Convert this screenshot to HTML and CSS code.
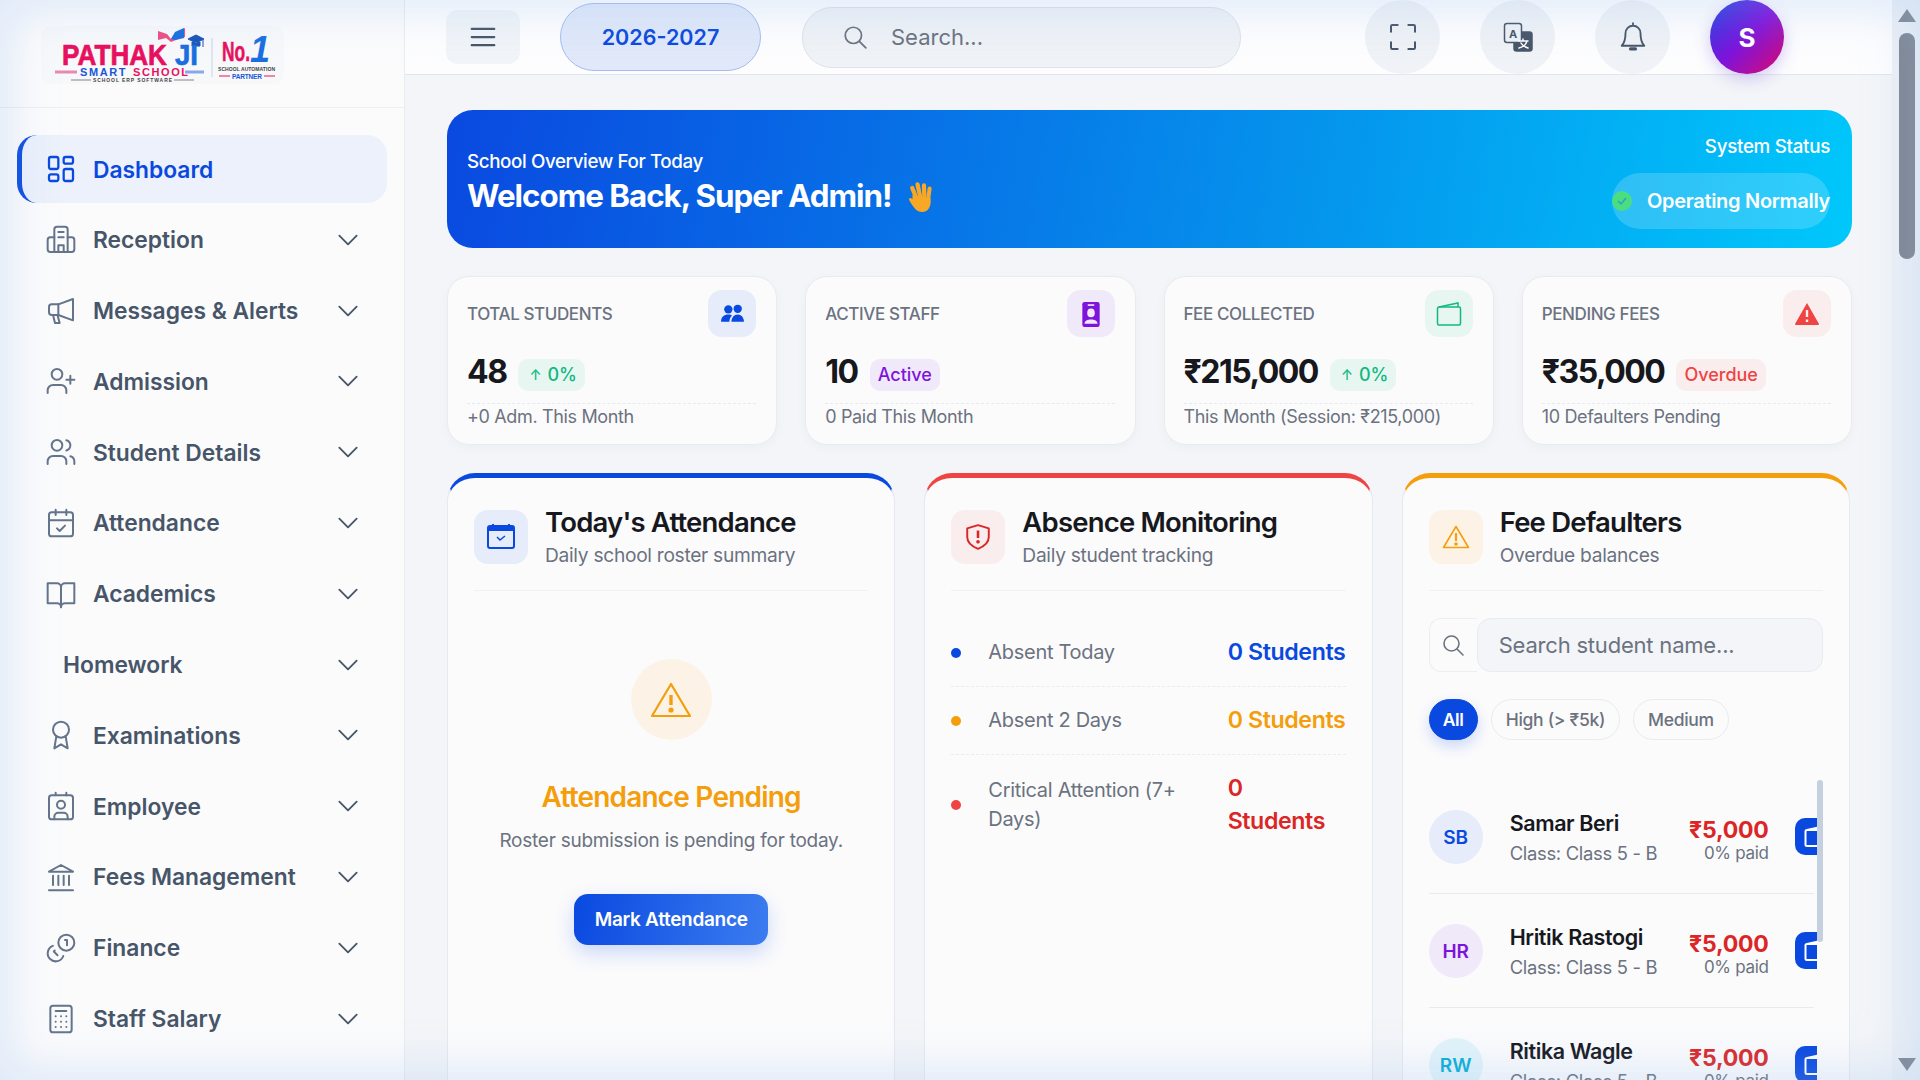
FILE: index.html
```html
<!DOCTYPE html>
<html lang="en">
<head>
    <meta charset="UTF-8">
    <meta name="viewport" content="width=device-width, initial-scale=1.0">
    <title>Pathak Ji Smart School - Dashboard</title>
    <link rel="stylesheet" href="styles.css">
</head>
<body>
    <aside class="sidebar">
        <div class="brand">
            <svg class="logo" viewBox="0 0 243 58" width="243" height="58">
                <rect width="243" height="58" rx="10" fill="#f7f8fa"/>
                <path d="M117 14V5l9 3 4 5v3l-5-4zM130 13l5-7 9-4v9l-9 3-5 2z" fill="#e8175d" opacity=".75"/>
                <path d="M130 13l4-7 9-4v10l-9 2z" fill="#1a6fe0"/>
                <path d="M147 13l8-4 8 4-8 4zM151 16v4h8v-4M162 13v8" fill="#1a55b8" stroke="#1a55b8"/>
                <text x="21" y="39" class="logo-big" fill="#e8105e" stroke="#e8105e" stroke-width=".7" textLength="105" lengthAdjust="spacingAndGlyphs">PATHAK</text>
                <text x="134" y="39" class="logo-big" fill="#1a6fe0" stroke="#1a6fe0" stroke-width=".7" textLength="23" lengthAdjust="spacingAndGlyphs">JI</text>
                <path d="M14 46h22" stroke="#e88ab0" stroke-width="3"/>
                <path d="M144 46h19" stroke="#88a8e8" stroke-width="3"/>
                <text x="39" y="50" class="logo-mid" fill="#1a55d8">SMART</text>
                <text x="92" y="50" class="logo-mid" fill="#e8105e">SCHOOL</text>
                <path d="M30 54h20M133 54h20" stroke="#555" stroke-width=".7"/>
                <text x="52" y="56" class="logo-tiny" fill="#444" textLength="79">SCHOOL ERP SOFTWARE</text>
                <path d="M171 12v39" stroke="#c9d3e6"/>
                <text x="181" y="35" class="logo-no" fill="#e8105e" stroke="#e8105e" stroke-width=".5" textLength="28" lengthAdjust="spacingAndGlyphs">No.</text>
                <text x="209" y="36" class="logo-one" fill="#1a6fe0">1</text>
                <text x="177" y="44.700" class="logo-tiny" fill="#444" textLength="57">SCHOOL AUTOMATION</text>
                <path d="M178 50h11M223 50h11" stroke="#e8105e"/>
                <text x="191" y="52.500" class="logo-partner" fill="#1a55d8" textLength="30">PARTNER</text>
            </svg>
        </div>
        <nav class="nav">
            <a class="nav-item active">
                <svg class="nav-icon" viewBox="0 0 24 24"><rect x="3" y="3" width="7" height="9" rx="1.500"/><rect x="14" y="3" width="7" height="5" rx="1.500"/><rect x="14" y="12" width="7" height="9" rx="1.500"/><rect x="3" y="16" width="7" height="5" rx="1.500"/></svg>
                <span>Dashboard</span>
            </a>
            <a class="nav-item">
                <svg class="nav-icon" viewBox="0 0 24 24"><path d="M7 21V4a2 2 0 0 1 2-2h6a2 2 0 0 1 2 2v17"/><path d="M7 10H4a2 2 0 0 0-2 2v7a2 2 0 0 0 2 2h16a2 2 0 0 0 2-2v-7a2 2 0 0 0-2-2h-3"/><path d="M10 6h4M10 10h4M10 21v-5h4v5"/></svg>
                <span>Reception</span>
                <svg class="chevron" viewBox="0 0 24 24"><path d="M4 8l8 8 8-8"/></svg>
            </a>
            <a class="nav-item">
                <svg class="nav-icon" viewBox="0 0 24 24"><path d="M21 3v16L10 15H5a2 2 0 0 1-2-2V9a2 2 0 0 1 2-2h5z"/><path d="M10 7v8M6 15l1.500 6h3.500l-1.500-5.500"/></svg>
                <span>Messages &amp; Alerts</span>
                <svg class="chevron" viewBox="0 0 24 24"><path d="M4 8l8 8 8-8"/></svg>
            </a>
            <a class="nav-item">
                <svg class="nav-icon" viewBox="0 0 24 24"><path d="M16 21v-2a4 4 0 0 0-4-4H6a4 4 0 0 0-4 4v2"/><circle cx="9" cy="7" r="4"/><path d="M19 8v6M22 11h-6"/></svg>
                <span>Admission</span>
                <svg class="chevron" viewBox="0 0 24 24"><path d="M4 8l8 8 8-8"/></svg>
            </a>
            <a class="nav-item">
                <svg class="nav-icon" viewBox="0 0 24 24"><path d="M16 21v-2a4 4 0 0 0-4-4H6a4 4 0 0 0-4 4v2"/><circle cx="9" cy="7" r="4"/><path d="M22 21v-2a4 4 0 0 0-3-3.870M16 3.130a4 4 0 0 1 0 7.750"/></svg>
                <span>Student Details</span>
                <svg class="chevron" viewBox="0 0 24 24"><path d="M4 8l8 8 8-8"/></svg>
            </a>
            <a class="nav-item">
                <svg class="nav-icon" viewBox="0 0 24 24"><rect x="3" y="4" width="18" height="18" rx="2"/><path d="M16 2v4M8 2v4M3 10h18M9 16l2 2 4-4"/></svg>
                <span>Attendance</span>
                <svg class="chevron" viewBox="0 0 24 24"><path d="M4 8l8 8 8-8"/></svg>
            </a>
            <a class="nav-item">
                <svg class="nav-icon" viewBox="0 0 24 24"><path d="M2 4h7a3 3 0 0 1 3 3v15a3 3 0 0 0-3-3H2z"/><path d="M22 4h-7a3 3 0 0 0-3 3v15a3 3 0 0 1 3-3h7z"/></svg>
                <span>Academics</span>
                <svg class="chevron" viewBox="0 0 24 24"><path d="M4 8l8 8 8-8"/></svg>
            </a>
            <a class="nav-item no-icon">
                <span>Homework</span>
                <svg class="chevron" viewBox="0 0 24 24"><path d="M4 8l8 8 8-8"/></svg>
            </a>
            <a class="nav-item">
                <svg class="nav-icon" viewBox="0 0 24 24"><circle cx="12" cy="8" r="6"/><path d="M15.500 13L17 22l-5-3-5 3 1.500-9"/></svg>
                <span>Examinations</span>
                <svg class="chevron" viewBox="0 0 24 24"><path d="M4 8l8 8 8-8"/></svg>
            </a>
            <a class="nav-item">
                <svg class="nav-icon" viewBox="0 0 24 24"><rect x="3" y="4" width="18" height="18" rx="2"/><circle cx="12" cy="11" r="3"/><path d="M7 22v-2a3 3 0 0 1 3-3h4a3 3 0 0 1 3 3v2M8 2v2M16 2v2"/></svg>
                <span>Employee</span>
                <svg class="chevron" viewBox="0 0 24 24"><path d="M4 8l8 8 8-8"/></svg>
            </a>
            <a class="nav-item">
                <svg class="nav-icon" viewBox="0 0 24 24"><path d="M3 22h18M6 18v-7M10 18v-7M14 18v-7M18 18v-7M12 3l9 5H3zM3 8h18"/></svg>
                <span>Fees Management</span>
                <svg class="chevron" viewBox="0 0 24 24"><path d="M4 8l8 8 8-8"/></svg>
            </a>
            <a class="nav-item">
                <svg class="nav-icon" viewBox="0 0 24 24"><circle cx="16" cy="8" r="6"/><path d="M5.900 10.400A6 6 0 1 0 13.700 18M15 6h1.500v4M7.300 13.900l-.7.700 2.800 2.800"/></svg>
                <span>Finance</span>
                <svg class="chevron" viewBox="0 0 24 24"><path d="M4 8l8 8 8-8"/></svg>
            </a>
            <a class="nav-item">
                <svg class="nav-icon" viewBox="0 0 24 24"><rect x="4" y="2" width="16" height="20" rx="2"/><path d="M8 6h8M8 10h.01M12 10h.01M16 10h.01M8 14h.01M12 14h.01M16 14h.01M8 18h.01M12 18h.01M16 18h.01"/></svg>
                <span>Staff Salary</span>
                <svg class="chevron" viewBox="0 0 24 24"><path d="M4 8l8 8 8-8"/></svg>
            </a>
        </nav>
    </aside>

    <div class="main">
        <header class="topbar">
            <button class="burger">
                <svg viewBox="0 0 24 24" width="30" height="30"><path d="M3 5.500h18M3 12h18M3 18.500h18"/></svg>
            </button>
            <div class="session">2026-2027</div>
            <div class="top-search">
                <svg viewBox="0 0 24 24" width="26" height="26"><circle cx="10.500" cy="10.500" r="7.500"/><path d="M16 16l6 6"/></svg>
                <span>Search...</span>
            </div>
            <div class="top-actions">
                <div class="round-btn">
                    <svg viewBox="0 0 24 24" width="32" height="32"><path d="M3 8V4a1 1 0 0 1 1-1h4M16 3h4a1 1 0 0 1 1 1v4M21 16v4a1 1 0 0 1-1 1h-4M8 21H4a1 1 0 0 1-1-1v-4"/></svg>
                </div>
                <div class="round-btn">
                    <svg viewBox="0 0 30 30" width="30" height="30"><rect x="11" y="10" width="18" height="19" rx="2.500" fill="#475569"/><rect x="1.500" y="1.500" width="17" height="19" rx="2.500" fill="#eef1f6"/><text x="10" y="16" class="translate-a">A</text><path d="M16 19h9M20 17v2M24 19c-1 4-4 6-8 7M18 21c1 2 4 4 7 5" stroke="#fff" stroke-width="1.500"/></svg>
                </div>
                <div class="round-btn">
                    <svg viewBox="0 0 24 24" width="30" height="30"><path d="M12 3a6 6 0 0 0-6 6c0 5-1 8-3 10h18c-2-2-3-5-3-10a6 6 0 0 0-6-6zM12 1v2"/><path d="M10 21.500h4" stroke-width="2.500"/></svg>
                </div>
                <div class="avatar-btn">S</div>
            </div>
        </header>

        <main class="content">
            <section class="banner">
                <div class="banner-left">
                    <p class="banner-sub">School Overview For Today</p>
                    <h1 class="banner-title">Welcome Back, Super Admin!
                        <svg class="wave" viewBox="0 0 28 32" width="30" height="34"><g fill="#f9a825"><rect x="6" y="6" width="4" height="15" rx="2" transform="rotate(-22 8 14)"/><rect x="10" y="3" width="4" height="16" rx="2" transform="rotate(-12 12 11)"/><rect x="15" y="4" width="4" height="16" rx="2" transform="rotate(-2 17 12)"/><rect x="19.500" y="7" width="3.800" height="15" rx="1.900" transform="rotate(8 21 14)"/><path d="M6 15l17 3c1 7-2 13-8 13-5 0-8-4-12-11-1-2 1-3 3-1z"/></g><path d="M3 7c0-2 1-3 2-4M24 4c1 1 2 2 2 4" stroke="#2a6fc0" fill="none"/></svg>
                    </h1>
                </div>
                <div class="banner-status">
                    <p class="status-label">System Status</p>
                    <div class="status-pill">
                        <svg viewBox="0 0 20 20" width="20" height="20"><circle cx="10" cy="10" r="10" fill="#4ade80"/><path d="M6 10l3 3 5-6" fill="none" stroke="#2aa5c8" stroke-width="1.500"/></svg>
                        <span>Operating Normally</span>
                    </div>
                </div>
            </section>

            <section class="stats">
                <div class="stat">
                    <div class="stat-head">
                        <span class="stat-label">TOTAL STUDENTS</span>
                        <div class="stat-icon tint-blue">
                            <svg viewBox="0 0 24 24" width="25" height="25" fill="#0a49e0"><circle cx="8" cy="8" r="4"/><circle cx="17" cy="7.500" r="4"/><path d="M1 20c0-5 3-7 7-7 2 0 3 .5 3.500 1-1.500 1.500-2.500 3.500-2.500 6zM11 20c0-4 2.500-7 6-7s6 3 6 7z"/></svg>
                        </div>
                    </div>
                    <div class="stat-value-row">
                        <span class="stat-value">48</span>
                        <span class="badge badge-green"><small>↑</small> 0%</span>
                    </div>
                    <p class="stat-foot">+0 Adm. This Month</p>
                </div>
                <div class="stat">
                    <div class="stat-head">
                        <span class="stat-label">ACTIVE STAFF</span>
                        <div class="stat-icon tint-purple">
                            <svg viewBox="0 0 24 24" width="26" height="26"><rect x="4" y="1" width="16" height="23" rx="2" fill="#7e14dc"/><rect x="9" y="3" width="6" height="1.500" fill="#f0e8f8"/><ellipse cx="12" cy="11" rx="3.500" ry="4" fill="#f0e8f8"/><path d="M6 21c0-3 3-4 6-4s6 1 6 4z" fill="#f0e8f8"/></svg>
                        </div>
                    </div>
                    <div class="stat-value-row">
                        <span class="stat-value">10</span>
                        <span class="badge badge-purple">Active</span>
                    </div>
                    <p class="stat-foot">0 Paid This Month</p>
                </div>
                <div class="stat">
                    <div class="stat-head">
                        <span class="stat-label">FEE COLLECTED</span>
                        <div class="stat-icon tint-green">
                            <svg viewBox="0 0 26 26" width="26" height="26" fill="none" stroke="#10b981" stroke-width="1.500"><rect x="1.500" y="6" width="23" height="18" rx="1.500"/><path d="M3 6l19-4v4"/></svg>
                        </div>
                    </div>
                    <div class="stat-value-row">
                        <span class="stat-value">₹215,000</span>
                        <span class="badge badge-green"><small>↑</small> 0%</span>
                    </div>
                    <p class="stat-foot">This Month (Session: ₹215,000)</p>
                </div>
                <div class="stat">
                    <div class="stat-head">
                        <span class="stat-label">PENDING FEES</span>
                        <div class="stat-icon tint-red">
                            <svg viewBox="0 0 26 24" width="26" height="24"><path d="M13 1l12 21a1 1 0 0 1-1 1H2a1 1 0 0 1-1-1z" fill="#ef4444"/><path d="M13 8v7M13 17.500v2.500" stroke="#fbeeee" stroke-width="2.400"/></svg>
                        </div>
                    </div>
                    <div class="stat-value-row">
                        <span class="stat-value">₹35,000</span>
                        <span class="badge badge-red">Overdue</span>
                    </div>
                    <p class="stat-foot">10 Defaulters Pending</p>
                </div>
            </section>

            <section class="panels">
                <div class="panel panel-blue">
                    <div class="panel-head">
                        <div class="panel-icon tint-blue">
                            <svg viewBox="0 0 28 28" width="28" height="28" fill="none" stroke="#0a49e0" stroke-width="2"><rect x="1" y="3" width="26" height="22" rx="2"/><path d="M1 6h26" stroke-width="4"/><path d="M6 1v3M22 1v3" /><path d="M10 14l3 3 5-4" stroke-width="1.500"/></svg>
                        </div>
                        <div>
                            <h2 class="panel-title">Today's Attendance</h2>
                            <p class="panel-sub">Daily school roster summary</p>
                        </div>
                    </div>
                    <div class="pending">
                        <div class="pending-circle">
                            <svg viewBox="0 0 42 36" width="42" height="36" fill="none" stroke="#f59e0b" stroke-width="2.200"><path d="M21 2l19 32H2z" stroke-linejoin="round"/><path d="M21 13v10" stroke-width="3.400"/><circle cx="21" cy="28" r="1.500" fill="#f59e0b"/></svg>
                        </div>
                        <h3 class="pending-title">Attendance Pending</h3>
                        <p class="pending-text">Roster submission is pending for today.</p>
                        <button class="mark-btn">Mark Attendance</button>
                    </div>
                </div>

                <div class="panel panel-red">
                    <div class="panel-head">
                        <div class="panel-icon tint-red">
                            <svg viewBox="0 0 24 26" width="26" height="28" fill="none" stroke="#dc2626" stroke-width="1.800"><path d="M12 2l10 3v8c0 6-5 9-10 11C7 22 2 19 2 13V5z" stroke-linejoin="round"/><path d="M12 7v7" stroke-width="2.400"/><circle cx="12" cy="17.500" r=".8" fill="#dc2626"/></svg>
                        </div>
                        <div>
                            <h2 class="panel-title">Absence Monitoring</h2>
                            <p class="panel-sub">Daily student tracking</p>
                        </div>
                    </div>
                    <div class="absence-list">
                        <div class="absence-row">
                            <span class="dot dot-blue"></span>
                            <span class="absence-label">Absent Today</span>
                            <span class="absence-count text-blue">0 Students</span>
                        </div>
                        <div class="absence-row">
                            <span class="dot dot-orange"></span>
                            <span class="absence-label">Absent 2 Days</span>
                            <span class="absence-count text-orange">0 Students</span>
                        </div>
                        <div class="absence-row absence-tall">
                            <span class="dot dot-red"></span>
                            <span class="absence-label">Critical Attention (7+ Days)</span>
                            <span class="absence-count text-red">0<br>Students</span>
                        </div>
                    </div>
                </div>

                <div class="panel panel-orange">
                    <div class="panel-head">
                        <div class="panel-icon tint-orange">
                            <svg viewBox="0 0 28 24" width="28" height="24" fill="none" stroke="#f59e0b" stroke-width="1.600"><path d="M14 1.500l12.500 21h-25z" stroke-linejoin="round"/><path d="M14 8v8" stroke-width="2.200"/><circle cx="14" cy="19" r="1" fill="#f59e0b"/></svg>
                        </div>
                        <div>
                            <h2 class="panel-title">Fee Defaulters</h2>
                            <p class="panel-sub">Overdue balances</p>
                        </div>
                    </div>
                    <div class="fee-search">
                        <div class="fee-search-icon">
                            <svg viewBox="0 0 24 24" width="24" height="24"><circle cx="10.500" cy="10.500" r="7.500"/><path d="M16 16l6 6"/></svg>
                        </div>
                        <div class="fee-search-input">Search student name...</div>
                    </div>
                    <div class="chips">
                        <span class="chip chip-active">All</span>
                        <span class="chip">High (&gt; ₹5k)</span>
                        <span class="chip">Medium</span>
                    </div>
                    <div class="fee-wrap">
                        <div class="fee-list">
                            <div class="fee-row">
                                <div class="fee-avatar tint-blue text-blue">SB</div>
                                <div class="fee-info">
                                    <div class="fee-name">Samar Beri</div>
                                    <div class="fee-class">Class: Class 5 - B</div>
                                </div>
                                <div class="fee-amount">
                                    <div class="fee-money">₹5,000</div>
                                    <div class="fee-paid">0% paid</div>
                                </div>
                                <div class="fee-action"><svg viewBox="0 0 26 26" width="26" height="26" fill="none" stroke="#fff" stroke-width="2"><rect x="1.500" y="6" width="23" height="16" rx="1.500"/><path d="M3 6l19-4"/></svg></div>
                            </div>
                            <div class="fee-row">
                                <div class="fee-avatar tint-purple text-purple">HR</div>
                                <div class="fee-info">
                                    <div class="fee-name">Hritik Rastogi</div>
                                    <div class="fee-class">Class: Class 5 - B</div>
                                </div>
                                <div class="fee-amount">
                                    <div class="fee-money">₹5,000</div>
                                    <div class="fee-paid">0% paid</div>
                                </div>
                                <div class="fee-action"><svg viewBox="0 0 26 26" width="26" height="26" fill="none" stroke="#fff" stroke-width="2"><rect x="1.500" y="6" width="23" height="16" rx="1.500"/><path d="M3 6l19-4"/></svg></div>
                            </div>
                            <div class="fee-row">
                                <div class="fee-avatar tint-cyan text-cyan">RW</div>
                                <div class="fee-info">
                                    <div class="fee-name">Ritika Wagle</div>
                                    <div class="fee-class">Class: Class 5 - B</div>
                                </div>
                                <div class="fee-amount">
                                    <div class="fee-money">₹5,000</div>
                                    <div class="fee-paid">0% paid</div>
                                </div>
                                <div class="fee-action"><svg viewBox="0 0 26 26" width="26" height="26" fill="none" stroke="#fff" stroke-width="2"><rect x="1.500" y="6" width="23" height="16" rx="1.500"/><path d="M3 6l19-4"/></svg></div>
                            </div>
                        </div>
                        <div class="fee-thumb"></div>
                    </div>
                </div>
            </section>
        </main>
    </div>

    <div class="page-scroll">
        <span class="arrow-up"></span>
        <span class="page-thumb"></span>
        <span class="arrow-down"></span>
    </div>

    <div class="vignette"></div>
</body>
</html>
```

FILE: styles.css
```css
* {
    box-sizing: border-box;
}
html, body {
    margin: 0;
    height: 100%;
}
body {
    display: flex;
    overflow: hidden;
    background-color: #f3f5f8;
    color: #16181d;
    font-family: Inter, "Noto Sans", sans-serif;
}
h1, h2, h3, p {
    margin: 0;
}

/* sidebar */
.sidebar {
    width: 405px;
    flex: none;
    height: 100vh;
    background-color: #fbfbfc;
    border-right: 1px solid #e8ebf1;
    overflow: hidden;
}
.brand {
    height: 108px;
    padding: 26px 0 0 41px;
    border-bottom: 1px solid #eceef3;
}
.logo {
    display: block;
}
.logo text {
    font-family: "Liberation Sans", sans-serif;
    font-weight: 700;
}
.logo-big { font-size: 30px; }
.logo-mid { font-size: 11px; letter-spacing: 1.600px; }
.logo-tiny { font-size: 5px; }
.logo-no { font-size: 27px; }
.logo-one { font-size: 36px; font-style: italic; }
.logo-partner { font-size: 6.500px; }

.nav {
    padding: 27px 17px 0;
    display: flex;
    flex-direction: column;
    gap: 2.800px;
}
.nav-item {
    height: 68px;
    flex: none;
    width: 370px;
    display: flex;
    align-items: center;
    gap: 16px;
    padding-left: 28px;
    padding-right: 26px;
    color: #475569;
    font-size: 22.800px;
    font-weight: 600;
    border-radius: 20px;
}
.nav-item span {
    flex: 1;
}
.nav-item.active {
    color: #0a49e0;
    background-color: #ecf1fb;
    border-left: 5px solid #0a49e0;
    padding-left: 23px;
}
.nav-item.no-icon {
    padding-left: 46px;
}
.nav-icon {
    width: 32px;
    height: 32px;
    flex: none;
    fill: none;
    stroke: #64748b;
    stroke-width: 1.500;
    stroke-linecap: round;
    stroke-linejoin: round;
}
.active .nav-icon {
    stroke: #0a49e0;
    stroke-width: 1.700;
}
.chevron {
    width: 26px;
    height: 26px;
    flex: none;
    fill: none;
    stroke: #475569;
    stroke-width: 1.700;
    stroke-linecap: round;
    stroke-linejoin: round;
}

/* top bar */
.main {
    width: 1487px;
    flex: none;
    height: 100vh;
    overflow: hidden;
}
.topbar {
    height: 75px;
    display: flex;
    align-items: center;
    padding-left: 41px;
    background-color: #fdfdfe;
    border-bottom: 1px solid #e2e6f0;
}
.burger {
    width: 74px;
    height: 54px;
    border: none;
    border-radius: 12px;
    background-color: #f1f4f8;
    display: flex;
    align-items: center;
    justify-content: center;
    padding: 0;
}
.burger svg {
    fill: none;
    stroke: #475569;
    stroke-width: 1.800;
    stroke-linecap: round;
}
.session {
    width: 201px;
    height: 68px;
    margin-left: 40px;
    border-radius: 34px;
    border: 1px solid #a5bdf2;
    background-color: #e0e8f9;
    color: #0a49e0;
    font-size: 21.500px;
    font-weight: 600;
    display: flex;
    align-items: center;
    justify-content: center;
}
.top-search {
    width: 439px;
    height: 61px;
    margin-left: 41px;
    border-radius: 30px;
    border: 1px solid #dde2ea;
    background-color: #eff2f6;
    display: flex;
    align-items: center;
    gap: 23px;
    padding-left: 39px;
    color: #6b7280;
    font-size: 22px;
}
.top-search svg, .fee-search-icon svg {
    fill: none;
    stroke: #6b7280;
    stroke-width: 1.600;
    stroke-linecap: round;
}
.top-actions {
    margin-left: 124px;
    display: flex;
    gap: 40px;
}
.round-btn {
    width: 75px;
    height: 74px;
    border-radius: 50%;
    background-color: #eff2f6;
    display: flex;
    align-items: center;
    justify-content: center;
}
.round-btn svg {
    fill: none;
    stroke: #475569;
    stroke-width: 1.500;
    stroke-linecap: round;
    stroke-linejoin: round;
}
.translate-a {
    font-size: 11px;
    font-weight: 700;
    fill: #475569;
    stroke: none;
    text-anchor: middle;
}
.avatar-btn {
    width: 74px;
    height: 74px;
    border-radius: 50%;
    background: linear-gradient(135deg, #1e40e0, #7e14dc 50%, #db0a6e);
    box-shadow: 0 5px 16px rgba(90, 50, 220, 0.25);
    color: white;
    font-size: 26px;
    font-weight: 700;
    display: flex;
    align-items: center;
    justify-content: center;
}

/* content */
.content {
    padding: 35px 40px 0 42px;
}
.banner {
    height: 138px;
    border-radius: 26px;
    background: linear-gradient(100deg, #0a49e0, #0592ec 60%, #00c8fb);
    color: white;
    display: flex;
    justify-content: space-between;
    align-items: center;
    padding: 0 22px 0 20px;
}
.banner-left {
    padding-top: 7px;
}
.banner-sub {
    font-size: 18.800px;
    font-weight: 500;
    letter-spacing: -0.4px;
    margin-bottom: 4px;
}
.banner-title {
    font-size: 31.300px;
    font-weight: 700;
    letter-spacing: -1px;
    display: flex;
    align-items: center;
    gap: 14px;
}
.wave {
    flex: none;
}
.banner-status {
    display: flex;
    flex-direction: column;
    align-items: flex-end;
    gap: 15px;
    padding-top: 5px;
}
.status-label {
    font-size: 18.800px;
    font-weight: 500;
    letter-spacing: -0.3px;
}
.status-pill {
    width: 218px;
    height: 56px;
    border-radius: 28px;
    background-color: rgba(255, 255, 255, 0.18);
    display: flex;
    align-items: center;
    justify-content: space-between;
    font-size: 20px;
    font-weight: 600;
    letter-spacing: -0.3px;
    white-space: nowrap;
}
.stats {
    display: grid;
    grid-template-columns: repeat(4, 1fr);
    gap: 28px;
    margin-top: 28px;
}
.stat {
    height: 169px;
    background-color: #fbfbfc;
    border: 1px solid #e9ebf0;
    border-radius: 22px;
    box-shadow: 0 3px 12px rgba(30, 50, 90, 0.03);
    padding: 13px 20px 0 19px;
}
.stat-head {
    display: flex;
    justify-content: space-between;
    align-items: center;
}
.stat-label {
    font-size: 17px;
    font-weight: 500;
    letter-spacing: -0.4px;
    color: #6b7280;
}
.stat-icon {
    width: 48px;
    height: 47px;
    border-radius: 14px;
    display: flex;
    align-items: center;
    justify-content: center;
}
.tint-blue { background-color: #e6ecfa; }
.tint-purple { background-color: #f0e9f9; }
.tint-green { background-color: #e8f6f1; }
.tint-red { background-color: #f9eded; }
.tint-orange { background-color: #fcf3e6; }
.tint-cyan { background-color: #e2f3fa; }
.stat-value-row {
    display: flex;
    align-items: center;
    gap: 12px;
    margin-top: 15px;
}
.stat-value {
    font-size: 32px;
    font-weight: 700;
    letter-spacing: -1.500px;
    color: #16181d;
}
.badge {
    height: 32px;
    margin-top: 6px;
    padding: 0 8px;
    border-radius: 10px;
    font-size: 18px;
    font-weight: 500;
    display: flex;
    align-items: center;
    gap: 6px;
}
.badge small {
    font-size: 14px;
}
.badge-green { background-color: #e8f6f1; color: #10b981; padding: 0 8px 0 11px; }
.badge-purple { background-color: #f0e9f9; color: #7e14dc; }
.badge-red { background-color: #f9eded; color: #ef4444; }
.stat-foot {
    margin-top: 12px;
    padding-top: 1px;
    border-top: 1px dashed #e6e9f0;
    font-size: 18px;
    letter-spacing: -0.35px;
    line-height: 24px;
    color: #6b7280;
}

/* panels */
.panels {
    display: grid;
    grid-template-columns: repeat(3, 1fr);
    gap: 29px;
    margin-top: 28px;
    margin-right: 2px;
}
.panel {
    height: 800px;
    background-color: #fbfbfc;
    border: 1px solid #e6e9ef;
    border-top: 5px solid #0a49e0;
    border-radius: 28px;
    padding: 32px 26px 0;
}
.panel-blue { border-top-color: #0a49e0; }
.panel-red { border-top-color: #ef4444; }
.panel-orange { border-top-color: #f59e0b; }
.panel-head {
    display: flex;
    gap: 17px;
    padding-bottom: 23px;
    border-bottom: 1px solid #eff1f5;
}
.panel-icon {
    width: 54px;
    height: 54px;
    flex: none;
    border-radius: 14px;
    display: flex;
    align-items: center;
    justify-content: center;
}
.panel-title {
    font-size: 27.500px;
    font-weight: 600;
    letter-spacing: -0.8px;
    line-height: 30px;
    margin-top: -3px;
}
.panel-sub {
    font-size: 19.200px;
    letter-spacing: -0.3px;
    line-height: 24px;
    margin-top: 6px;
    color: #6b7280;
}
.pending {
    display: flex;
    flex-direction: column;
    align-items: center;
    padding-top: 68px;
}
.pending-circle {
    width: 81px;
    height: 81px;
    border-radius: 50%;
    background-color: #fcf3e6;
    display: flex;
    align-items: center;
    justify-content: center;
}
.pending-title {
    font-size: 28px;
    font-weight: 600;
    letter-spacing: -0.8px;
    line-height: 34px;
    color: #f59e0b;
    margin-top: 40px;
}
.pending-text {
    font-size: 19px;
    letter-spacing: -0.25px;
    line-height: 24px;
    color: #6b7280;
    margin-top: 15px;
}
.mark-btn {
    width: 194px;
    height: 51px;
    margin-top: 41px;
    border: none;
    border-radius: 14px;
    background: linear-gradient(100deg, #0a49e0, #3b7cf0);
    box-shadow: 0 8px 20px rgba(10, 73, 224, 0.2);
    color: white;
    font-family: inherit;
    font-size: 19px;
    font-weight: 600;
    letter-spacing: -0.3px;
}

/* absence */
.absence-list {
    padding-top: 28px;
}
.absence-row {
    min-height: 68px;
    display: flex;
    align-items: center;
    border-bottom: 1px dashed #eaecf1;
}
.absence-tall {
    min-height: 100px;
    border-bottom: none;
}
.dot {
    width: 10px;
    height: 10px;
    border-radius: 50%;
    flex: none;
    margin-right: 27px;
}
.dot-blue { background-color: #0a49e0; }
.dot-orange { background-color: #f59e0b; }
.dot-red { background-color: #ef4444; }
.absence-label {
    flex: 1;
    font-size: 20px;
    letter-spacing: -0.3px;
    line-height: 29px;
    color: #6b7280;
    padding-right: 30px;
}
.absence-count {
    width: 118px;
    flex: none;
    font-size: 23.200px;
    font-weight: 600;
    letter-spacing: -0.4px;
    line-height: 33px;
    white-space: nowrap;
}
.text-blue { color: #0a49e0; }
.text-orange { color: #f59e0b; }
.text-red { color: #dc2626; }
.text-purple { color: #7e14dc; }
.text-cyan { color: #06aed4; }

/* fee defaulters */
.fee-search {
    display: flex;
    margin-top: 27px;
}
.fee-search-icon {
    width: 48px;
    height: 54px;
    border: 1px solid #eceef3;
    border-right: none;
    border-radius: 12px 0 0 12px;
    display: flex;
    align-items: center;
    justify-content: center;
}
.fee-search-input {
    flex: 1;
    height: 54px;
    border: 1px solid #e8ebf0;
    border-radius: 14px;
    background-color: #f3f5f8;
    color: #6b7280;
    font-size: 22px;
    letter-spacing: -0.2px;
    display: flex;
    align-items: center;
    padding-left: 21px;
}
.chips {
    display: flex;
    gap: 13px;
    margin-top: 27px;
}
.chip {
    height: 41px;
    padding: 0 14px;
    border: 1px solid #e8ebf0;
    border-radius: 21px;
    color: #6b7280;
    font-size: 17.500px;
    font-weight: 500;
    letter-spacing: -0.3px;
    display: flex;
    align-items: center;
}
.chip-active {
    padding: 0 13px;
    background-color: #0a49e0;
    border-color: #0a49e0;
    color: white;
    font-weight: 600;
    box-shadow: 0 6px 14px rgba(10, 73, 224, 0.2);
}
.fee-wrap {
    display: flex;
    margin-top: 40px;
}
.fee-list {
    width: 388px;
    height: 400px;
    overflow: hidden;
    padding-right: 3px;
}
.fee-thumb {
    width: 6px;
    height: 162px;
    border-radius: 3px;
    background-color: #c5d0de;
}
.fee-row {
    display: flex;
    padding: 30px 0 27px;
    border-bottom: 1px solid #e8eaef;
}
.fee-avatar {
    width: 54px;
    height: 54px;
    flex: none;
    border-radius: 50%;
    font-size: 19px;
    font-weight: 600;
    display: flex;
    align-items: center;
    justify-content: center;
}
.fee-info {
    flex: 1;
    min-width: 0;
    padding-left: 27px;
}
.fee-name {
    font-size: 21.500px;
    font-weight: 600;
    letter-spacing: -0.4px;
    line-height: 26px;
}
.fee-class {
    font-size: 18.400px;
    letter-spacing: -0.3px;
    line-height: 26px;
    margin-top: 4px;
    color: #6b7280;
}
.fee-amount {
    text-align: right;
    padding-top: 7px;
}
.fee-money {
    font-size: 23px;
    font-weight: 700;
    letter-spacing: -0.2px;
    line-height: 26px;
    color: #dc2626;
}
.fee-paid {
    font-size: 17px;
    letter-spacing: -0.3px;
    line-height: 20px;
    color: #6b7280;
}
.fee-action {
    width: 48px;
    height: 37px;
    flex: none;
    margin: 8px -29px 0 26px;
    border-radius: 10px;
    background-color: #0a49e0;
    display: flex;
    align-items: center;
    padding-left: 9px;
}

/* page scrollbar */
.page-scroll {
    width: 28px;
    flex: none;
    height: 100vh;
    position: relative;
    background-color: #eef1f6;
}
.page-thumb {
    position: absolute;
    top: 33px;
    left: 7px;
    width: 16px;
    height: 226px;
    border-radius: 8px;
    background-color: #7f8590;
}
.arrow-up, .arrow-down {
    position: absolute;
    left: 6px;
    width: 0;
    height: 0;
    border-left: 9px solid transparent;
    border-right: 9px solid transparent;
}
.arrow-up {
    top: 9px;
    border-bottom: 13px solid #7f8590;
}
.arrow-down {
    bottom: 9px;
    border-top: 13px solid #7f8590;
}

/* soft blue tint around the screen edges */
.vignette {
    position: fixed;
    inset: 0;
    pointer-events: none;
    box-shadow: inset 0 0 50px 8px rgba(150, 190, 240, 0.3);
}
```
